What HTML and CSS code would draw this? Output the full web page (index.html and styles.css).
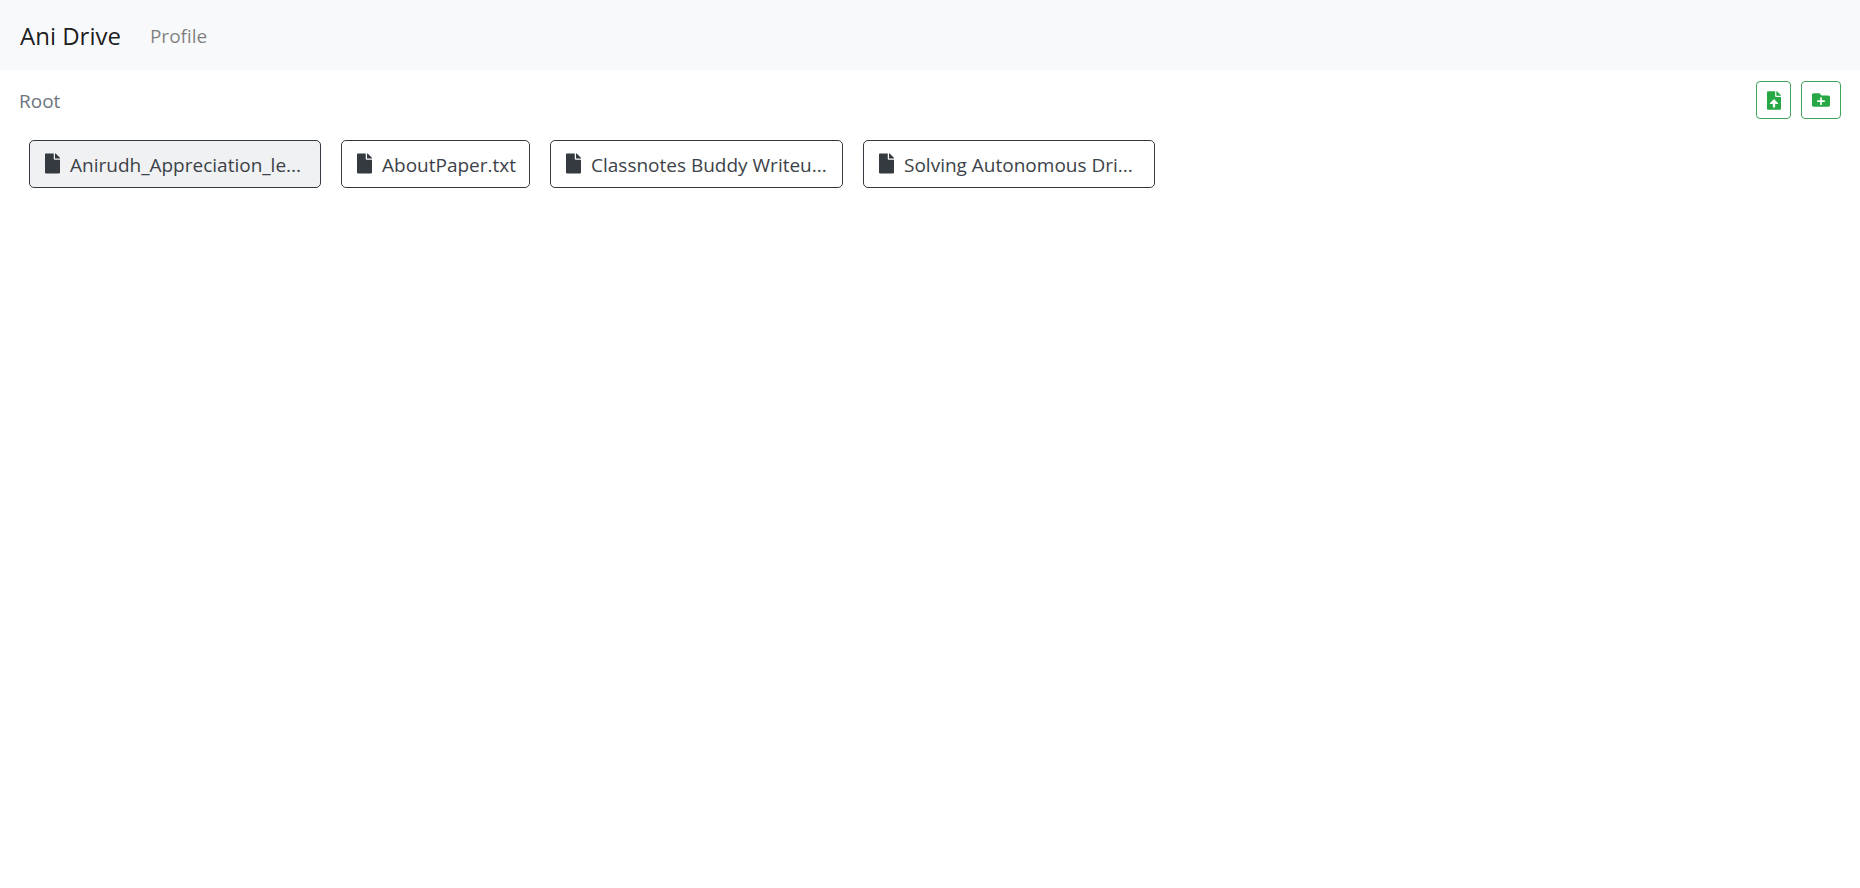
FILE: index.html
```html
<!DOCTYPE html>
<html lang="en">
<head>
<meta charset="utf-8">
<title>Ani Drive</title>
<link rel="stylesheet" href="styles.css">
</head>
<body>
<nav class="navbar">
  <a class="brand">Ani Drive</a>
  <a class="nav-link">Profile</a>
</nav>
<main class="content">
  <div class="toolbar">
    <span class="crumb">Root</span>
    <div class="actions">
      <button class="action action-upload"><svg class="action-icon" viewBox="0 0 384 512"><path d="M224 136V0H24C10.700 0 0 10.700 0 24v464c0 13.300 10.700 24 24 24h336c13.300 0 24-10.700 24-24V160H248c-13.200 0-24-10.800-24-24zm65.180 216.010H224v80c0 8.840-7.160 16-16 16h-32c-8.840 0-16-7.160-16-16v-80H94.820c-14.280 0-21.410-17.290-11.270-27.360l96.420-95.700c6.650-6.610 17.390-6.610 24.040 0l96.420 95.700c10.150 10.070 3.030 27.360-11.250 27.360zM377 105L279.100 7c-4.500-4.500-10.600-7-17-7H256v128h128v-6.100c0-6.300-2.500-12.400-7-16.900z"/></svg></button>
      <button class="action action-folder"><svg class="action-icon" viewBox="0 0 512 512"><path d="M464 128H272l-54.630-54.630c-6-6-14.140-9.370-22.620-9.370H48C21.490 64 0 85.490 0 112v288c0 26.510 21.490 48 48 48h416c26.510 0 48-21.490 48-48V176c0-26.510-21.490-48-48-48zm-96 168c0 8.840-7.160 16-16 16h-72v72c0 8.840-7.160 16-16 16h-16c-8.840 0-16-7.160-16-16v-72h-72c-8.840 0-16-7.160-16-16v-16c0-8.840 7.160-16 16-16h72v-72c0-8.840 7.160-16 16-16h16c8.840 0 16 7.160 16 16v72h72c8.840 0 16 7.160 16 16v16z"/></svg></button>
    </div>
  </div>
  <div class="files">
    <button class="file file-wide file-active"><svg class="file-icon" viewBox="0 0 384 512"><path d="M224 136V0H24C10.700 0 0 10.700 0 24v464c0 13.300 10.700 24 24 24h336c13.300 0 24-10.700 24-24V160H248c-13.200 0-24-10.800-24-24zm160-14.100v6.100H256V0h6.100c6.400 0 12.500 2.500 17 7l97.900 98c4.500 4.500 7 10.600 7 16.900z"/></svg><span class="file-name">Anirudh_Appreciation_le...</span></button>
    <button class="file file-short"><svg class="file-icon" viewBox="0 0 384 512"><path d="M224 136V0H24C10.700 0 0 10.700 0 24v464c0 13.300 10.700 24 24 24h336c13.300 0 24-10.700 24-24V160H248c-13.200 0-24-10.800-24-24zm160-14.100v6.100H256V0h6.100c6.400 0 12.500 2.500 17 7l97.900 98c4.500 4.500 7 10.600 7 16.900z"/></svg><span class="file-name">AboutPaper.txt</span></button>
    <button class="file file-wider"><svg class="file-icon" viewBox="0 0 384 512"><path d="M224 136V0H24C10.700 0 0 10.700 0 24v464c0 13.300 10.700 24 24 24h336c13.300 0 24-10.700 24-24V160H248c-13.200 0-24-10.800-24-24zm160-14.100v6.100H256V0h6.100c6.400 0 12.500 2.500 17 7l97.900 98c4.500 4.500 7 10.600 7 16.900z"/></svg><span class="file-name">Classnotes Buddy Writeu...</span></button>
    <button class="file file-wide"><svg class="file-icon" viewBox="0 0 384 512"><path d="M224 136V0H24C10.700 0 0 10.700 0 24v464c0 13.300 10.700 24 24 24h336c13.300 0 24-10.700 24-24V160H248c-13.200 0-24-10.800-24-24zm160-14.100v6.100H256V0h6.100c6.400 0 12.500 2.500 17 7l97.900 98c4.500 4.500 7 10.600 7 16.900z"/></svg><span class="file-name">Solving Autonomous Dri...</span></button>
  </div>
</main>
</body>
</html>
```
FILE: styles.css
```css
* { box-sizing: border-box; }
html, body { margin: 0; padding: 0; }
body {
  font-family: "Open Sans", "Liberation Sans", sans-serif;
  font-size: 20px;
  color: #212529;
  background: #fff;
}
.navbar {
  height: 70px;
  background: #f8f9fa;
  display: flex;
  align-items: center;
  padding: 0 20px;
  gap: 29px;
}
.brand { font-size: 24px; color: rgba(0,0,0,.9); }
.nav-link { font-size: 19px; color: rgba(0,0,0,.5); padding-top: 1px; }
.content { padding: 11px 10px 0 19px; }
.toolbar {
  display: flex;
  justify-content: space-between;
  align-items: center;
  height: 38px;
}
.crumb { color: #6c757d; font-size: 19px; padding-top: 2px; }
.actions { display: flex; gap: 10px; padding-right: 9px; }
.action {
  height: 38px;
  padding: 0;
  background: #fff;
  border: 1px solid #3fa45a;
  border-radius: 4px;
  display: flex;
  align-items: center;
  justify-content: center;
  fill: #28a745;
}
.action-upload { width: 35px; }
.action-folder { width: 40px; }
.action-upload .action-icon { width: 14px; height: 19px; }
.action-folder .action-icon { width: 18px; height: 18px; }
.files {
  display: flex;
  gap: 20px;
  margin-top: 21px;
  padding-left: 10px;
}
.file {
  height: 48px;
  display: flex;
  align-items: center;
  padding: 0 0 0 15px;
  background: #fff;
  border: 1px solid #343a40;
  border-radius: 5px;
  color: #3c4248;
  font: inherit;
  font-size: 19px;
  white-space: nowrap;
}
.file-wide { width: 292px; }
.file-wider { width: 293px; }
.file-short { width: 189px; }
.file-active { background: #f0f1f2; }
.file-name { position: relative; top: 1px; }
.file-icon { width: 15px; height: 21px; fill: #343a40; margin-right: 10px; margin-top: -1px; flex: none; }
```
